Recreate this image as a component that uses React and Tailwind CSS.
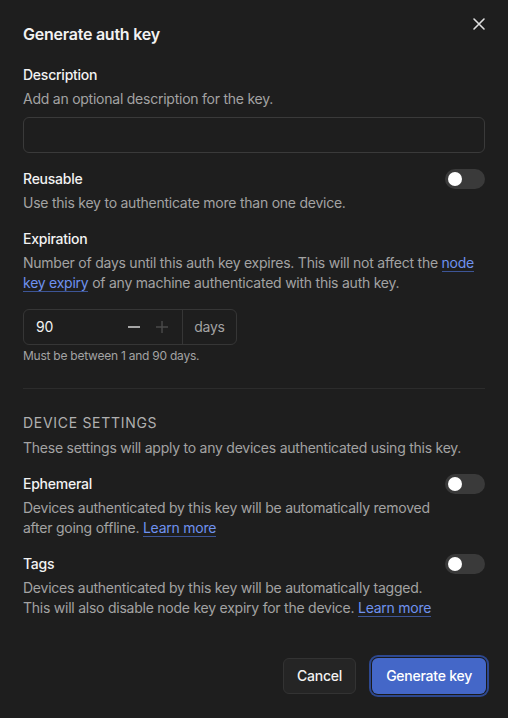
import React, { useState } from "react";

const Toggle = ({ on, onChange }) => (
  <button
    onClick={() => onChange(!on)}
    className={`relative w-10 h-5 rounded-full shrink-0 ${on ? "bg-[#4467c8]" : "bg-[#3a3a3a]"}`}
  >
    <span
      className={`absolute top-[3px] w-[14px] h-[14px] rounded-full bg-white ${on ? "left-[23px]" : "left-[3px]"}`}
    />
  </button>
);

const Link = ({ children }) => (
  <a href="#" className="text-[#6f92ef] border-b border-[#3d5596]">
    {children}
  </a>
);

const App = () => {
  const [description, setDescription] = useState("");
  const [reusable, setReusable] = useState(false);
  const [days, setDays] = useState(90);
  const [ephemeral, setEphemeral] = useState(false);
  const [tags, setTags] = useState(false);

  return (
    <div
      className="w-[508px] h-[718px] overflow-hidden bg-[#1e1e1e] text-[#f2f2f2] tracking-[-0.015em]"
      style={{ fontFamily: "Inter, 'Noto Sans', sans-serif" }}
    >
      <div className="px-[23px] pt-[22px]">
        <div className="flex items-center justify-between">
          <h1 className="text-base leading-6 font-semibold">Generate auth key</h1>
          <button className="-mt-5 -mr-[1px] text-[#e0e0e0]">
            <svg width="14" height="14" viewBox="0 0 14 14" fill="none" stroke="currentColor" strokeWidth="1.6" strokeLinecap="round">
              <path d="M2 2l10 10M12 2L2 12" />
            </svg>
          </button>
        </div>

        <div className="mt-[19px] text-sm leading-5">
          <div className="font-medium">Description</div>
          <p className="mt-1 text-[#a3a3a3]">Add an optional description for the key.</p>
          <input
            value={description}
            onChange={(e) => setDescription(e.target.value)}
            className="mt-2 w-full h-9 rounded-md border border-[#3a3a3a] bg-[#1e1e1e] px-3 outline-none"
          />
        </div>

        <div className="mt-4 text-sm leading-5">
          <div className="flex items-center justify-between">
            <span className="font-medium">Reusable</span>
            <Toggle on={reusable} onChange={setReusable} />
          </div>
          <p className="mt-1 text-[#a3a3a3]">Use this key to authenticate more than one device.</p>
        </div>

        <div className="mt-4 text-sm leading-5">
          <div className="font-medium">Expiration</div>
          <p className="mt-1 text-[#a3a3a3]">
            Number of days until this auth key expires. This will not affect the <Link>node key expiry</Link> of any machine authenticated with this auth key.
          </p>
          <div className="mt-4 flex w-[214px] h-9 rounded-md border border-[#363636]">
            <div className="flex items-center w-[159px] pl-3 pr-2 border-r border-[#363636]">
              <span className="flex-1">{days}</span>
              <button onClick={() => setDays(Math.max(1, days - 1))} className="w-6 flex justify-center text-[#c8c8c8]">
                <svg width="12" height="12" viewBox="0 0 12 12" stroke="currentColor" strokeWidth="1.6">
                  <path d="M0 6h12" />
                </svg>
              </button>
              <button onClick={() => setDays(Math.min(90, days + 1))} className="ml-1 w-6 flex justify-center text-[#4a4a4a]">
                <svg width="12" height="12" viewBox="0 0 12 12" stroke="currentColor" strokeWidth="1.4">
                  <path d="M0 6h12M6 0v12" />
                </svg>
              </button>
            </div>
            <div className="flex-1 flex items-center justify-center text-[#a3a3a3]">days</div>
          </div>
          <p className="mt-[3px] text-xs leading-4 text-[#a3a3a3]">Must be between 1 and 90 days.</p>
        </div>

        <div className="mt-6 border-t border-[#2c2c2c]" />

        <div className="mt-6 text-sm leading-5">
          <div className="uppercase tracking-[0.05em] text-[#b0b0b0]">Device settings</div>
          <p className="mt-[5px] text-[#a3a3a3]">These settings will apply to any devices authenticated using this key.</p>
        </div>

        <div className="mt-4 text-sm leading-5">
          <div className="flex items-center justify-between">
            <span className="font-medium">Ephemeral</span>
            <Toggle on={ephemeral} onChange={setEphemeral} />
          </div>
          <p className="mt-1 pr-[47px] text-[#a3a3a3]">
            Devices authenticated by this key will be automatically removed after going offline. <Link>Learn more</Link>
          </p>
        </div>

        <div className="mt-4 text-sm leading-5">
          <div className="flex items-center justify-between">
            <span className="font-medium">Tags</span>
            <Toggle on={tags} onChange={setTags} />
          </div>
          <p className="mt-1 pr-[47px] text-[#a3a3a3]">
            Devices authenticated by this key will be automatically tagged. This will also disable node key expiry for the device. <Link>Learn more</Link>
          </p>
        </div>

        <div className="mt-10 flex justify-end items-center gap-4 mr-[-1px]">
          <button className="h-9 px-[13px] rounded-md bg-[#252525] border border-[#333] text-sm font-medium">
            Cancel
          </button>
          <button className="h-9 px-[14px] rounded-md bg-[#4467c8] text-sm font-medium text-white ring-2 ring-[#2d4890] ring-offset-1 ring-offset-[#1a1a1a]">
            Generate key
          </button>
        </div>
      </div>
    </div>
  );
};

export default App;
